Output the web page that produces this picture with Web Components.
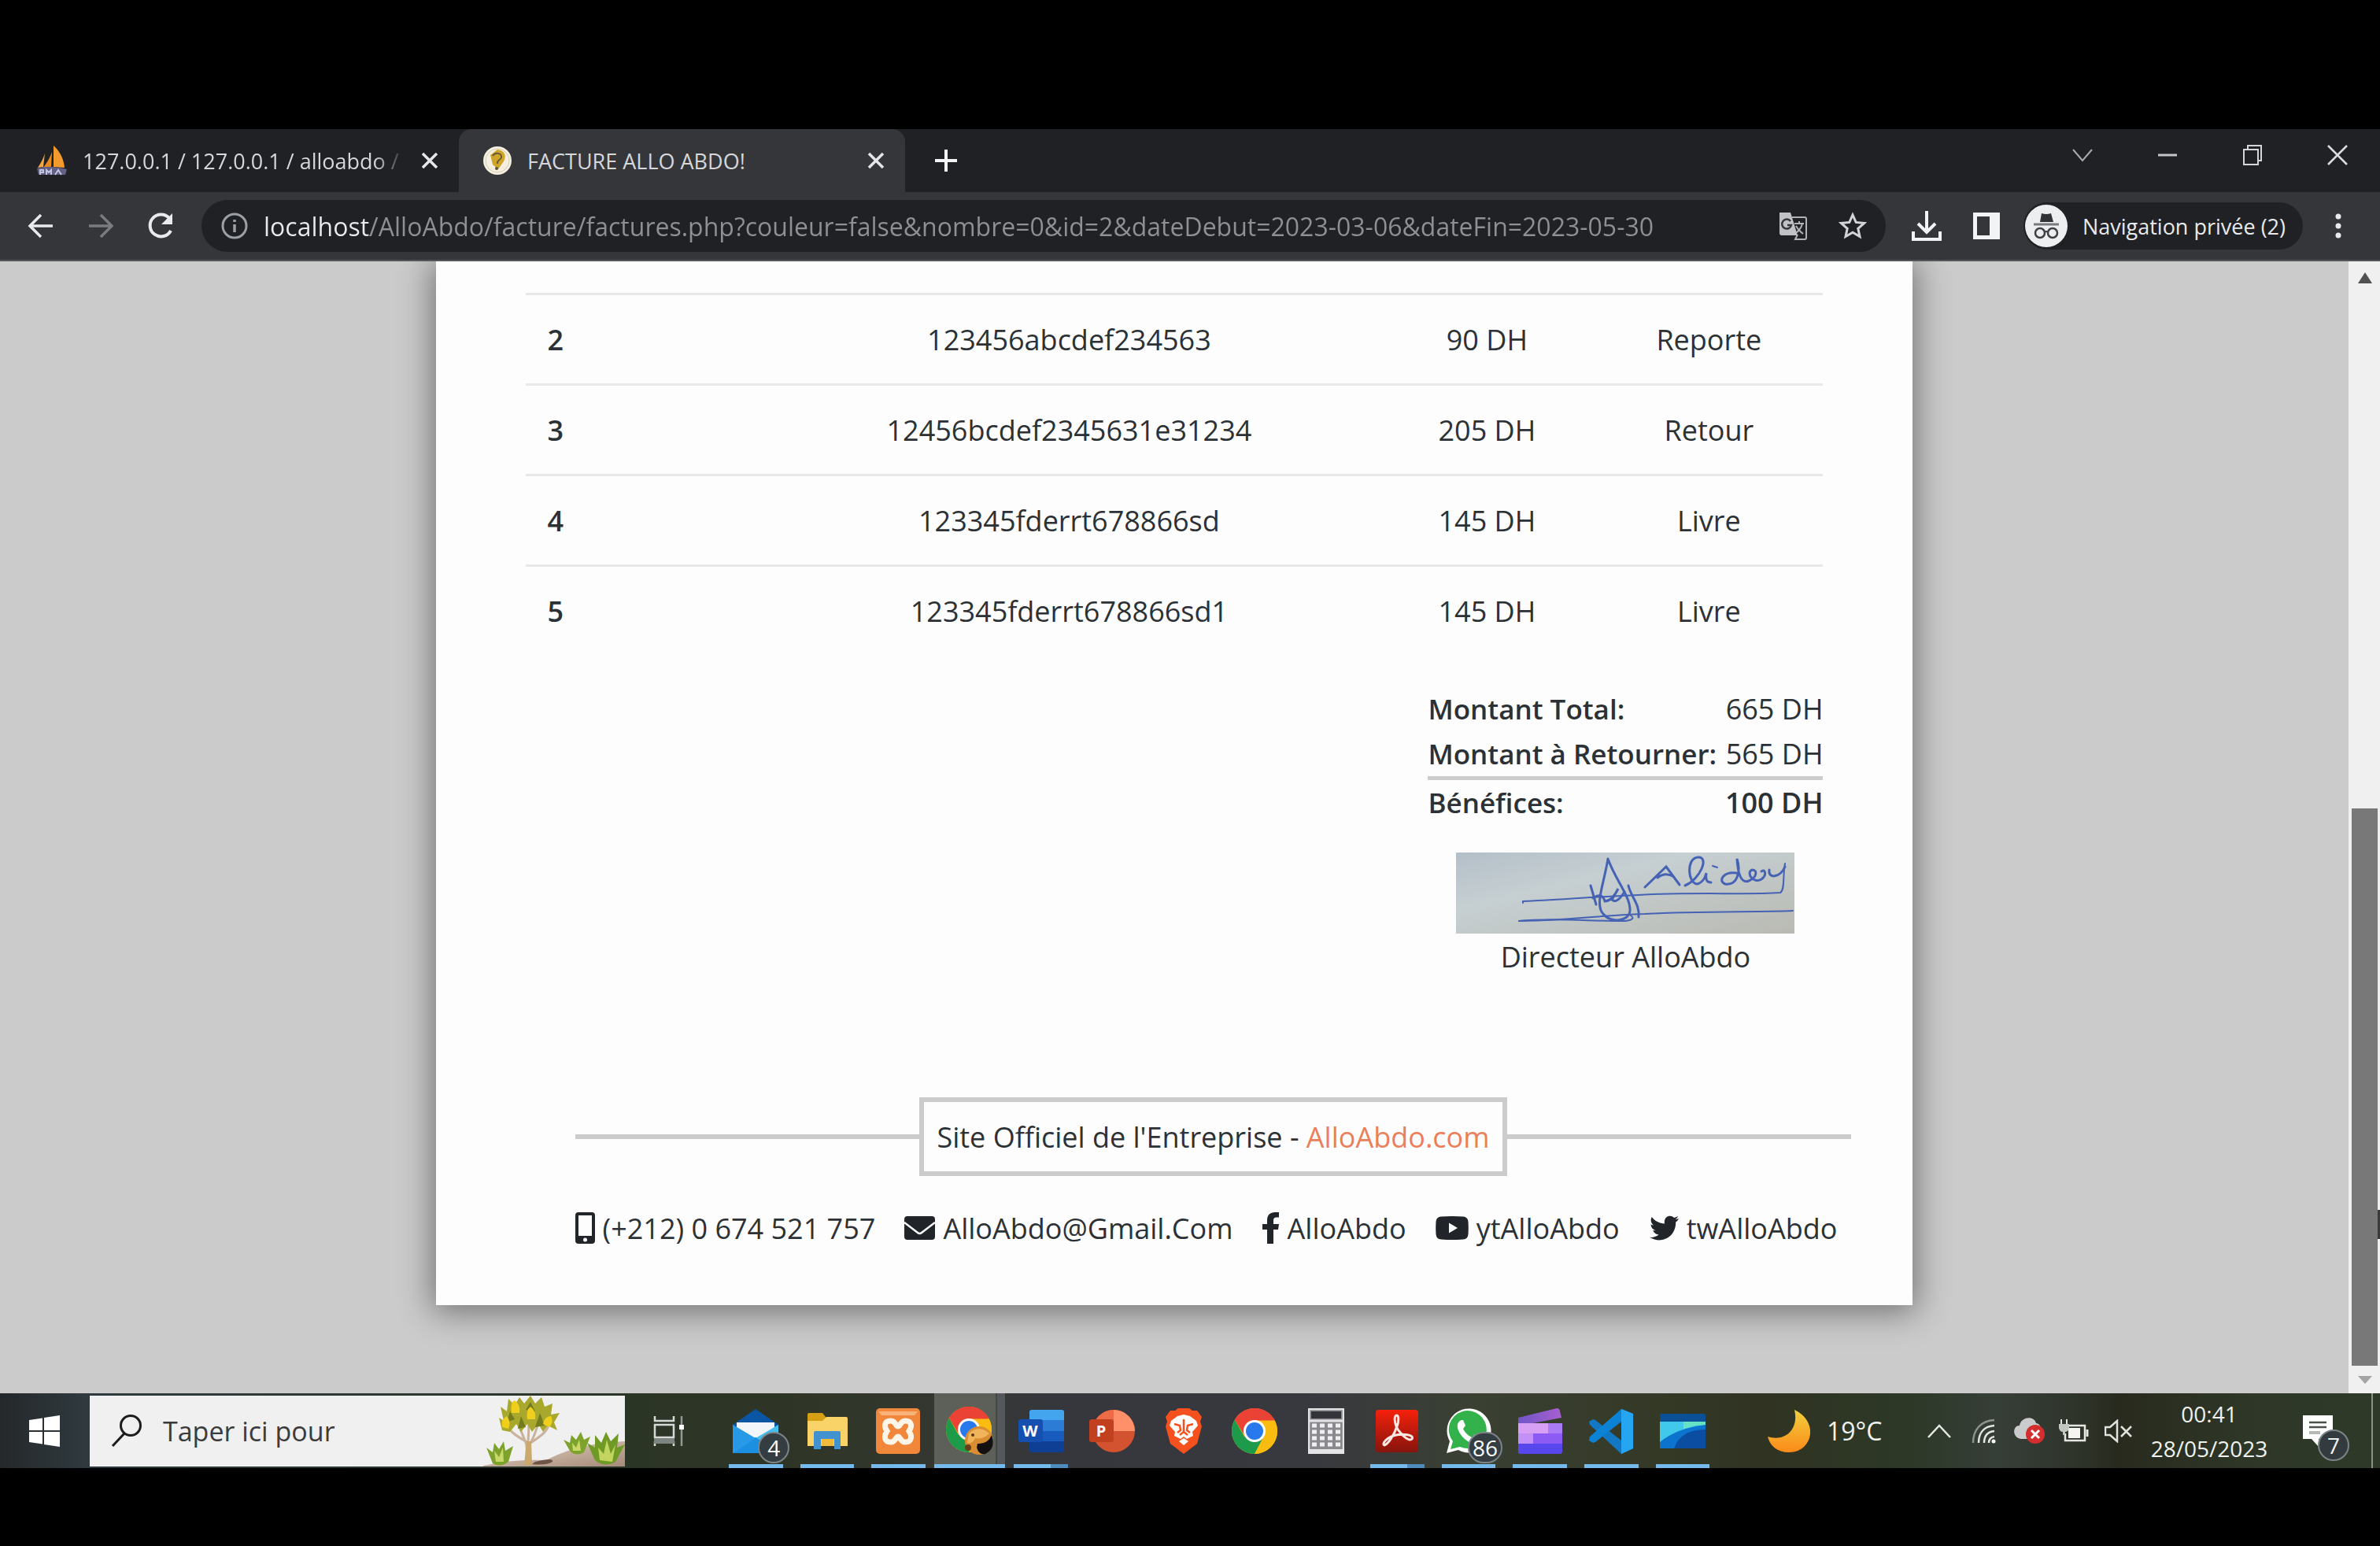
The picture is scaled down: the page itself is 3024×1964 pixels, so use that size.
<!DOCTYPE html>
<html lang="fr">
<head>
<meta charset="utf-8">
<title>FACTURE ALLO ABDO!</title>
<style>
html{height:100%}
body{margin:0;min-height:100%;background:#000;font-family:"Open Sans","Noto Sans",sans-serif;color:#fff}
</style>
</head>
<body>
<desktop-screen></desktop-screen>
<script>
const chromeLogo = `
<circle cx="30" cy="29" r="29" fill="#fbbc12"/>
<path d="M30 29L4.900 14.500A29 29 0 0 1 55.100 14.500Z" fill="#ea4335"/>
<path d="M4.900 14.500A29 29 0 0 0 30 58L43 36L30 29L17 36Z" fill="#1e9a4b"/>
<path d="M30 15.500H55.700A29 29 0 0 0 4.900 14.500L18 36Z" fill="#ea4335"/>
<path d="M30 15.500H55.700A29 29 0 0 1 30 58L42 35Z" fill="#fbbc12"/>
<circle cx="30" cy="29" r="14" fill="#fff"/><circle cx="30" cy="29" r="11" fill="#2878ee"/>`;

const ICONS = {
  sails: [40,38,`<path d="M22 0C31 8 35 18 36 28L22 27Z" fill="#f59a2c"/><path d="M20 8L19 27L9 28C15 20 18 14 20 8Z" fill="#e98b1c"/><path d="M11 10L9 27L2 28C6 22 9 16 11 10Z" fill="#f3a548"/><path d="M1 29C12 25 28 27 39 30L37 37H3Z" fill="#626084"/><path d="M5 37V31H9V34H5M13 37V31L16 34L19 31V37M24 37L28 31L32 37" stroke="#c3c4e0" stroke-width="2" fill="none"/>`],
  coin: [38,38,`<circle cx="19" cy="19" r="18" fill="#f4efe1"/><circle cx="19" cy="19" r="15" fill="none" stroke="#d8cfae" stroke-width="1"/><path d="M19 5C28 6 31 13 27 20L20 30L13 24L10 12Z" fill="#d0a52c"/><path d="M13 13C16 8 25 9 24 15C23 19 18 18 19 23" stroke="#6a5a32" stroke-width="2" fill="none"/><circle cx="18" cy="29" r="2" fill="#5d5135"/>`],
  close: [22,22,`<path d="M2 2L20 20M20 2L2 20" stroke="#e4e6e8" stroke-width="3.500" fill="none"/>`],
  plus: [32,32,`<path d="M16 2V30M2 16H30" stroke="#f1f3f4" stroke-width="4"/>`],
  chevron: [28,18,`<path d="M2 2L14 16L26 2" stroke="#a9abad" stroke-width="2" fill="none"/>`],
  minimize: [24,6,`<path d="M0 3H24" stroke="#c3c5c7" stroke-width="3"/>`],
  restore: [26,28,`<rect x="2" y="7" width="18" height="19" fill="none" stroke="#d3d5d7" stroke-width="2"/><path d="M7 6V2H24V21H21" fill="none" stroke="#d3d5d7" stroke-width="2"/>`],
  winclose: [26,26,`<path d="M1 1L25 25M25 1L1 25" stroke="#d9dbdd" stroke-width="2.500"/>`],
  back: [34,32,`<path d="M32 16H3M17 2L3 16L17 30" stroke="#e8eaed" stroke-width="3.500" fill="none"/>`],
  forward: [34,32,`<path d="M2 16H31M17 2L31 16L17 30" stroke="#797b7e" stroke-width="3.500" fill="none"/>`],
  reload: [36,34,`<path d="M29 7A14 14 0 1 0 31 23" stroke="#e8eaed" stroke-width="4" fill="none"/><path d="M33 1V15H19Z" fill="#e8eaed"/>`],
  info: [34,34,`<circle cx="17" cy="17" r="15" fill="none" stroke="#9aa0a6" stroke-width="3"/><path d="M17 15V25M17 9V12" stroke="#9aa0a6" stroke-width="3.500"/>`],
  translate: [36,36,`<path d="M1 1H15L24 30H4A3 3 0 0 1 1 27Z" fill="#c0c2c5"/><path d="M17 7H33A2 2 0 0 1 35 9V33A2 2 0 0 1 33 35H21L24 29" fill="none" stroke="#b0b3b6" stroke-width="2"/><path d="M15 12A6 6 0 1 0 16 17H11" stroke="#34363a" stroke-width="2.500" fill="none"/><path d="M20 15H32M26 12V15M30 15C29 20 26 24 22 27M22 18C24 22 27 25 31 28" stroke="#b0b3b6" stroke-width="2" fill="none"/>`],
  star: [36,36,`<path d="M18 4L22.200 13.400L32.500 14.500L24.800 21.400L27 31.500L18 26.300L9 31.500L11.200 21.400L3.500 14.500L13.800 13.400Z" fill="none" stroke="#d2d4d7" stroke-width="3"/>`],
  download: [38,40,`<path d="M19 1V27M8 17L19 28L30 17" stroke="#f1f3f4" stroke-width="4" fill="none"/><path d="M2 27V37H36V27" stroke="#f1f3f4" stroke-width="4" fill="none"/>`],
  panel: [36,36,`<path d="M1 1H35V35H1ZM6 6V30H22V6Z" fill="#f1f3f4" fill-rule="evenodd"/>`],
  incognito: [54,54,`<circle cx="27" cy="27" r="27" fill="#eceef0"/><path d="M19 22L21 11Q27 13 33 11L36 22Z" fill="#303236"/><path d="M11 25H43" stroke="#77797c" stroke-width="3"/><circle cx="19" cy="36" r="6" fill="none" stroke="#3f4145" stroke-width="2.500"/><circle cx="35" cy="36" r="6" fill="none" stroke="#3f4145" stroke-width="2.500"/><path d="M25 35Q27 33 29 35" stroke="#3f4145" stroke-width="2" fill="none"/>`],
  dots: [10,34,`<circle cx="5" cy="5" r="3.500" fill="#e8eaed"/><circle cx="5" cy="17" r="3.500" fill="#e8eaed"/><circle cx="5" cy="29" r="3.500" fill="#e8eaed"/>`],
  phone: [25,40,`<path d="M4 0H21A4 4 0 0 1 25 4V36A4 4 0 0 1 21 40H4A4 4 0 0 1 0 36V4A4 4 0 0 1 4 0ZM4 4V30H21V4Z" fill="#212529" fill-rule="evenodd"/><circle cx="12.500" cy="35" r="2.500" fill="#fdfdfd"/>`],
  mail: [39,30,`<rect width="39" height="30" rx="4" fill="#212529"/><path d="M0 8L17 21Q19.500 23 22 21L39 8" fill="none" stroke="#fdfdfd" stroke-width="2.500"/>`],
  facebook: [22,40,`<path d="M6 40V22H0V15H6V10C6 3.500 10 0 16 0H21V6.500H18C15 6.500 14 8 14 10.500V15H21L20 22H14V40Z" fill="#212529"/>`],
  youtube: [42,30,`<path d="M7 .5Q21-.5 35 .5Q41 1 41.500 7Q42 15 41.500 23Q41 29 35 29.500Q21 30.500 7 29.500Q1 29 .5 23Q0 15 .5 7Q1 1 7 .5Z" fill="#212529"/><path d="M17 8.500V21.500L28 15Z" fill="#fdfdfd"/>`],
  twitter: [38,32,`<path d="M38 4C36.600 4.600 35.200 5 33.600 5.200C35.200 4.200 36.400 2.800 37 1C35.500 1.900 33.800 2.500 32 2.900C27.500-1.800 18.500 1 20 10.500C13.500 10.200 7.600 7.200 3.700 2C1.700 5.500 2.600 10 6.100 12.400C4.800 12.400 3.600 12 2.600 11.400C2.600 15.100 5.200 18.200 8.800 19C7.600 19.300 6.500 19.300 5.300 19.100C6.300 22.200 9.200 24.500 12.600 24.500C9.300 27.100 5 28.300 1 27.800C15.500 37 34.500 28 34.200 8.600C35.700 7.500 37 6 38 4Z" fill="#212529"/>`],
  windows: [40,40,`<path d="M0 6L17 3.500V19H0ZM19 3L39 0V19H19ZM0 21H17V36.500L0 34ZM19 21H39V40L19 37Z" fill="#fff"/>`],
  search: [40,42,`<circle cx="25" cy="14" r="12.500" fill="none" stroke="#1d1d1d" stroke-width="3"/><path d="M17 24L2 40" stroke="#1d1d1d" stroke-width="3"/>`],
  taskview: [40,40,`<path d="M2 1V7H26V1M2 39V33M26 39V33" fill="none" stroke="#d6dad6" stroke-width="2.500"/><rect x="2" y="12" width="24" height="16" fill="none" stroke="#d6dad6" stroke-width="2.500"/><rect x="1" y="29" width="26" height="7" fill="#7d8580"/><path d="M36 1V39" stroke="#929993" stroke-width="2.500"/><rect x="33" y="12" width="6" height="6" fill="#fff"/>`],
  desert: [180,90,`<defs><linearGradient id="sand" x1="0" y1="0" x2="1" y2="1"><stop offset="0" stop-color="#e5d5c4"/><stop offset="1" stop-color="#a58a78"/></linearGradient></defs>
    <path d="M0 89Q40 80 80 82Q120 60 180 58V90H0Z" fill="url(#sand)"/><path d="M66 84Q90 78 88 84Q80 89 62 87Z" fill="#6f5546"/>
    <path d="M53 88C57 72 55 62 54 58C40 50 32 44 30 36M54 60C50 48 46 42 44 34M57 58C58 46 58 40 58 32M60 60C72 52 82 46 84 34M60 60C66 50 68 42 70 34" stroke="#c9b19c" stroke-width="3" fill="none"/><path d="M52 88L55 58H61L62 88Z" fill="#cba86c"/>
    <path d="M24 44L20 28L26 32L22 14L30 20L32 4L40 12L46 2L52 10L60 0L66 10L74 2L78 14L88 10L86 24L97 22L90 34L94 44L82 38L76 46L70 36L62 46L56 36L48 46L42 36L34 46Z" fill="#a8a82c"/>
    <path d="M30 34L34 20L40 30ZM44 42L48 26L54 40ZM66 40L72 22L78 38ZM54 18L60 8L66 20Z" fill="#727b1e"/>
    <path d="M36 22Q34 8 40 6Q48 12 46 22ZM56 30Q54 18 60 14Q68 20 66 30ZM24 40Q22 30 30 26Q36 34 32 42ZM76 36Q78 26 86 26Q90 34 84 40Z" fill="#f0cf1c"/>
    <path d="M12 86L4 66L12 72L14 60L20 68L26 58L28 70L38 64L32 84Q22 92 12 86Z" fill="#7ea32c"/><path d="M16 84L14 70L20 78L25 66L26 84Z" fill="#c8d869"/>
    <path d="M110 70L102 56L110 60L112 50L118 56L124 46L128 56L136 52L128 72Q118 78 110 70Z" fill="#7ea32c"/><path d="M114 70L113 60L118 66L122 56L124 70Z" fill="#c8d869"/>
    <path d="M142 82L132 60L142 66L142 50L150 60L156 46L162 58L172 48L170 66L180 62L168 84Q154 92 142 82Z" fill="#6f9a25"/><path d="M148 82L146 66L153 74L157 56L162 74L168 62L164 84Z" fill="#c3d460"/>`],
  mailapp: [58,56,`<path d="M0 20L29 0L58 20V30H0Z" fill="#0a56a4"/><path d="M5 17H53V40H5Z" fill="#f2f6fa"/><path d="M0 20L29 37L0 56Z" fill="#2aa4ea"/><path d="M58 20L29 37L58 56Z" fill="#45c0ee"/><path d="M0 55L29 36L58 55V56H0Z" fill="#1b8fe0"/><path d="M0 56L31 36L26 36L0 20Z" fill="#2799e6"/>`],
  explorer: [52,46,`<path d="M1 2A2 2 0 0 1 3 0H20L24 5V16H1Z" fill="#d69e13"/><path d="M1 10H20L25 5H50A2 2 0 0 1 52 7V42H1Z" fill="#fad368"/><path d="M9 25A2 2 0 0 1 11 23H41A2 2 0 0 1 43 25V46H35V33H18V46H9Z" fill="#4292cf"/><rect x="19" y="33" width="15" height="9" fill="#f0bb38"/>`],
  xampp: [56,58,`<rect width="56" height="58" rx="5" fill="#f1873b"/><path d="M3 4H53L49 9H7Z" fill="#f8b27c"/><path d="M19 16C10 16 10 23 14 29C10 35 10 43 19 43C25 43 25 36 28 36C31 36 31 43 37 43C46 43 46 35 42 29C46 23 46 16 37 16C31 16 31 23 28 23C25 23 25 16 19 16Z" fill="none" stroke="#fdf6e8" stroke-width="7"/>`],
  chrome: [60,58,chromeLogo],
  chromeuser: [62,62,chromeLogo+`<circle cx="43" cy="43" r="18" fill="#d98d33"/><path d="M30 34Q42 22 56 34Q48 42 38 40Q34 48 28 46Z" fill="#f0b55b"/><path d="M41 47Q54 48 59 36Q65 53 51 60Q43 62 40 52Z" fill="#141010"/><circle cx="35" cy="36" r="2" fill="#5d3a17"/><circle cx="29" cy="52" r="4" fill="#6b3d16"/>`],
  word: [58,54,`<rect x="14" y="0" width="44" height="54" rx="3" fill="#0f3f94"/><path d="M14 3A3 3 0 0 1 17 0H55A3 3 0 0 1 58 3V14H14Z" fill="#42a5ee"/><rect x="14" y="13" width="44" height="14" fill="#2c7cd6"/><rect x="14" y="27" width="44" height="13" fill="#195abd"/><rect x="0" y="12" width="31" height="29" rx="3" fill="#154fb0"/><text x="15" y="34" font-size="20" font-weight="700" fill="#fff" text-anchor="middle">W</text>`],
  powerpoint: [58,54,`<circle cx="31" cy="27" r="27" fill="#d35230"/><path d="M31 0A27 27 0 0 1 58 27H31Z" fill="#ff9069"/><path d="M31 0V27H4A27 27 0 0 1 31 0Z" fill="#ed6c47"/><rect x="0" y="12" width="31" height="29" rx="3" fill="#c1401f"/><text x="15" y="34" font-size="20" font-weight="700" fill="#fff" text-anchor="middle">P</text>`],
  brave: [50,58,`<path d="M14 3L18 0H32L36 3L42 3L48 11L46 17L48 23L42 45L25 58L8 45L2 23L4 17L2 11L8 3Z" fill="#f4511e"/><path d="M25 8L33 10L41 16L43 22L36 30L37 35L29 39L25 36L21 39L13 35L14 30L7 22L9 16L17 10Z" fill="#fff"/><path d="M13 20L20 22L21 28L17 31M37 20L30 22L29 28L33 31M25 14V30L20 34M25 30L30 34" fill="none" stroke="#f4511e" stroke-width="2.500"/><path d="M19 42L25 38L31 42L25 47Z" fill="#fff"/>`],
  calculator: [46,58,`<path d="M1 1H45V57H1Z" fill="#8a8a8e" stroke="#e4e4e6" stroke-width="2.500"/><rect x="4" y="4" width="38" height="9" fill="#333439"/><path d="M1 16H45" stroke="#e4e4e6" stroke-width="3"/><path d="M5 22H41M5 30H41M5 38H41M5 46H41" stroke="#f0f0f2" stroke-width="5" stroke-dasharray="6 4"/><path d="M1 54H45" stroke="#e4e4e6" stroke-width="4"/>`],
  acrobat: [56,56,`<defs><linearGradient id="red" x2="0" y2="1"><stop stop-color="#f5210c"/><stop offset="1" stop-color="#86140d"/></linearGradient></defs><rect x="1" y="1" width="54" height="54" rx="4" fill="url(#red)"/><path d="M26 9C30 5 31 14 28 22C24 34 16 45 12 46C8 44 16 35 27 33C38 31 50 33 47 38C43 42 31 31 27 22C25 16 24 12 26 9Z" fill="none" stroke="#fbe7e4" stroke-width="3"/>`],
  whatsapp: [58,58,`<path d="M1 57L5 42A28 28 0 1 1 16 53Z" fill="#fff"/><path d="M6 52L9 42A24 24 0 1 1 18 49Z" fill="#33b14a"/><path d="M20 15C14 17 13 24 18 32C24 41 32 46 39 44C43 42 45 39 43 37L37 33L33 37Q25 33 22 26L25 22L22 15Z" fill="#fff"/>`],
  clipchamp: [58,58,`<defs><linearGradient id="clip" x2="1"><stop stop-color="#6f55c8"/><stop offset="1" stop-color="#a75fcf"/></linearGradient></defs><path d="M1 12L50 0Q54 0 54 4L56 12L4 22H1Z" fill="url(#clip)"/><path d="M1 19H57V54Q57 58 53 58H5Q1 58 1 54Z" fill="#8b5bf3"/><path d="M1 19H39V32H1Z" fill="#d8a0f5"/><path d="M39 19H57V32H39Z" fill="#a97cf6"/><path d="M1 32H20V45H1Z" fill="#c391f6"/><path d="M1 45H57V54Q57 58 53 58H5Q1 58 1 54Z" fill="#5747ec"/>`],
  vscode: [58,58,`<path d="M42 1L57 7V51L42 58L2 21L1 17L6 14L9 15L42 41Z" fill="#1278c4"/><path d="M42 1L57 7V51L42 58V17L9 43L6 44L1 41L2 36Z" fill="#0b82d4"/><path d="M42 1L57 7V51L42 58Z" fill="#25a5f2"/>`],
  lens: [58,44,`<rect width="58" height="44" rx="2" fill="#0b4f97"/><path d="M0 10H58V20C38 18 22 26 16 44H0Z" fill="#41c9ec"/><path d="M30 10H58V15Q42 14 30 20Z" fill="#65e3c4"/><path d="M0 36Q22 18 58 14V44H0Z" fill="#0c74cf"/><path d="M18 44Q26 20 58 20V44Z" fill="#0b4da0"/>`],
  moon: [54,56,`<defs><linearGradient id="glow" x2="0" y2="1"><stop stop-color="#f2d03c"/><stop offset="1" stop-color="#fb8a1a"/></linearGradient></defs><path d="M34 1C66 16 57 55 27 55C12 55 3 47 0 35C22 42 40 26 34 1Z" fill="url(#glow)"/>`],
  up: [32,18,`<path d="M2 17L16 2L30 17" fill="none" stroke="#e6e9e4" stroke-width="2.500"/>`],
  wifi: [32,32,`<path d="M2 31C2 14 12 3 29 2" fill="none" stroke="#8d938c" stroke-width="2.500"/><path d="M9 31C9 18 16 10 29 9M16 31C16 23 20 17 29 16M22 31C22 27 24 24 29 23" fill="none" stroke="#e2e5e0" stroke-width="2.500"/><circle cx="28" cy="29" r="2.500" fill="#fff"/>`],
  cloud: [40,36,`<path d="M10 28C-2 26-1 11 8 11C10-1 27-2 29 8C38 9 37 26 28 28Z" fill="#c9cbcc"/><circle cx="28" cy="22" r="12" fill="#d32f2f"/><path d="M23 17L33 27M33 17L23 27" stroke="#fff" stroke-width="3"/>`],
  battery: [38,30,`<path d="M11 8H33V27H8V18" fill="none" stroke="#e4e7e2" stroke-width="2.500"/><rect x="12" y="11" width="15" height="13" fill="#f4f5f3"/><path d="M36 13V22" stroke="#e4e7e2" stroke-width="3"/><path d="M3 0V6M10 0V6" stroke="#e4e7e2" stroke-width="2"/><path d="M0 6H13V11Q12 16 8 16V20H5V16Q1 16 0 11Z" fill="#c2c7c0"/>`],
  speaker: [36,30,`<path d="M1 10H7L16 2V28L7 20H1Z" fill="none" stroke="#dfe2dd" stroke-width="2.500"/><path d="M21 9L34 22M34 9L21 22" stroke="#dfe2dd" stroke-width="2.500"/>`],
  notice: [38,40,`<path d="M0 0H38V30H20V40L11 30H0Z" fill="#fff"/><path d="M8 9H30M8 15H30" stroke="#4a5148" stroke-width="2.500"/><path d="M8 22H22" stroke="#b4b8b3" stroke-width="4"/>`],
  signature: [430,103,`<defs><linearGradient id="sheet" x2="1" y2="1"><stop stop-color="#b3bfc8"/><stop offset=".35" stop-color="#c6cfd2"/><stop offset="1" stop-color="#b9bab2"/></linearGradient></defs><rect width="430" height="103" fill="url(#sheet)"/>
    <g fill="none" stroke="#4562b4" stroke-width="3" stroke-linecap="round"><path d="M85 64V62C130 60 180 56 232 54C300 50 370 54 412 51C418 48 415 30 418 14" stroke-width="2"/><path d="M80 87C160 86 170 80 240 78C310 74 380 76 428 74" stroke-width="2"/><path d="M80 87C120 82 180 88 215 87C222 86 228 84 222 80" stroke-width="2"/>
    <path d="M171 42L178 66"/><path d="M193 8C188 40 176 66 187 78C196 90 220 88 221 74C222 56 202 34 193 8"/><path d="M174 58Q186 50 189 62Q198 62 206 46L198 60Q204 66 214 50"/><path d="M219 42C222 56 234 66 232 82"/><path d="M240 44L267 18L284 41M256 32Q266 24 277 31"/><path d="M291 42C310 34 322 6 308 6C292 6 294 40 307 40C314 38 317 30 318 26C317 34 318 38 324 38"/><path d="M326 17L332 19" stroke-width="2"/><path d="M356 26C340 24 332 36 342 40C358 42 362 24 357 8C358 26 362 40 372 36C382 32 384 22 376 22C368 26 378 40 388 34C396 28 392 20 388 24M398 22C396 34 412 32 418 18"/></g>`]
};

const define = (name, css, html, setup) => customElements.define(name, class extends HTMLElement {
  constructor() {
    super();
    const t = document.createElement('template');
    t.innerHTML = `<style>:host,*{box-sizing:border-box}button{font:inherit;color:inherit;background:none;border:0;padding:0;margin:0;display:flex;align-items:center;justify-content:center}${css}</style>${html}`;
    this.attachShadow({mode: 'open'}).append(t.content.cloneNode(true));
  }
  connectedCallback() { if (setup) setup(this, this.shadowRoot); }
});

customElements.define('ui-icon', class extends HTMLElement {
  connectedCallback() {
    if (this.shadowRoot) return;
    const [w, h, body] = ICONS[this.getAttribute('name')];
    this.attachShadow({mode: 'open'}).innerHTML =
      `<style>:host{display:block;flex:none}svg{display:block}</style><svg width="${w}" height="${h}" viewBox="0 0 ${w} ${h}" aria-hidden="true">${body}</svg>`;
  }
});

define('browser-tab',
  `:host{display:flex;align-items:center;gap:19px;width:567px;height:80px;padding:0 26px 0 30px;font-size:27px;color:#d5d7da}
   :host([active]){background:#35363a;border-radius:16px 16px 0 0}
   .title{flex:1;min-width:0;overflow:hidden;white-space:nowrap}
   :host([fade]) .title{-webkit-mask-image:linear-gradient(90deg,#000 90%,transparent)}`,
  `<slot name="icon"></slot><span class="title"><slot></slot></span><button aria-label="Fermer l'onglet"><ui-icon name="close"></ui-icon></button>`);

define('tab-strip',
  `:host{display:flex;height:80px;background:#202124;padding-left:16px}
   .new{width:104px;height:80px}.controls{display:flex;margin-left:auto}.controls button{width:108px;height:66px}`,
  `<browser-tab fade><ui-icon slot="icon" name="sails"></ui-icon>127.0.0.1 / 127.0.0.1 / alloabdo / c</browser-tab>
   <browser-tab active><ui-icon slot="icon" name="coin"></ui-icon>FACTURE ALLO ABDO!</browser-tab>
   <button class="new" aria-label="Nouvel onglet"><ui-icon name="plus"></ui-icon></button>
   <div class="controls"><button aria-label="Rechercher"><ui-icon name="chevron"></ui-icon></button><button aria-label="Réduire"><ui-icon name="minimize"></ui-icon></button><button aria-label="Restaurer"><ui-icon name="restore"></ui-icon></button><button aria-label="Fermer"><ui-icon name="winclose"></ui-icon></button></div>`);

define('nav-toolbar',
  `:host{display:flex;align-items:center;height:88px;background:#35363a;border-bottom:2px solid #55565a;padding:0 15px 0 14px}
   button{width:76px;height:66px}
   .omnibox{flex:1;min-width:0;height:66px;border-radius:33px;background:#202124;margin:0 14px;padding:0 4px 0 25px;display:flex;align-items:center;gap:20px}
   .actions{display:flex}
   input{flex:1;min-width:0;height:60px;border:0;padding:0;outline:0;font:inherit;font-size:32px;color:#9aa0a6;background:linear-gradient(90deg,#e8eaed 135px,#8d9094 135px);-webkit-background-clip:text;background-clip:text;-webkit-text-fill-color:transparent}
   .profile{width:auto;height:60px;border-radius:30px;background:#202124;margin:0 7px 0 9px;padding:0 22px 0 2px;gap:19px;font-size:27px;color:#e8eaed;white-space:nowrap}`,
  `<button aria-label="Retour"><ui-icon name="back"></ui-icon></button><button aria-label="Avancer"><ui-icon name="forward"></ui-icon></button><button aria-label="Actualiser"><ui-icon name="reload"></ui-icon></button>
   <div class="omnibox"><ui-icon name="info"></ui-icon><input type="text" aria-label="Adresse" value="localhost/AlloAbdo/facture/factures.php?couleur=false&amp;nombre=0&amp;id=2&amp;dateDebut=2023-03-06&amp;dateFin=2023-05-30"><div class="actions"><button aria-label="Traduire"><ui-icon name="translate"></ui-icon></button><button aria-label="Favori"><ui-icon name="star"></ui-icon></button></div></div>
   <button aria-label="Téléchargements"><ui-icon name="download"></ui-icon></button><button aria-label="Panneau latéral"><ui-icon name="panel"></ui-icon></button>
   <button class="profile"><ui-icon name="incognito"></ui-icon><span>Navigation privée (2)</span></button>
   <button aria-label="Menu"><ui-icon name="dots"></ui-icon></button>`);

define('invoice-lines',
  `:host{display:block}table{width:100%;border-collapse:collapse;table-layout:fixed}
   th,td{height:115px;padding:0 28px;border-top:3px solid #e6e8e9;font-size:36px;text-align:center;font-weight:400}
   td{padding:0}th{text-align:left;font-weight:600}`,
  `<table><colgroup><col style="width:18%"><col style="width:47.8%"><col style="width:16.6%"><col style="width:17.6%"></colgroup><tbody></tbody></table>`,
  (host, root) => {
    root.querySelector('tbody').innerHTML = [
      ['2', '123456abcdef234563', '90 DH', 'Reporte'],
      ['3', '12456bcdef2345631e31234', '205 DH', 'Retour'],
      ['4', '123345fderrt678866sd', '145 DH', 'Livre'],
      ['5', '123345fderrt678866sd1', '145 DH', 'Livre']
    ].map(([n, ...cells]) => `<tr><th scope="row">${n}</th>${cells.map(c => `<td>${c}</td>`).join('')}</tr>`).join('');
  });

define('invoice-totals',
  `:host{display:block;width:502px;margin-left:auto;font-size:36px;line-height:57px;white-space:nowrap}
   table{width:100%;border-collapse:collapse}th,td{padding:0;text-align:left;font-weight:600}th{font-size:35px}td{text-align:right;font-weight:400}
   .net th,.net td{border-top:5px solid #ccc;font-weight:600}
   figure{margin:35px 0 0;display:flex;flex-direction:column;align-items:center}figcaption{line-height:60px}`,
  `<table><tr><th scope="row">Montant Total:</th><td>665 DH</td></tr><tr><th scope="row">Montant à Retourner:</th><td>565 DH</td></tr><tr class="net"><th scope="row">Bénéfices:</th><td>100 DH</td></tr></table>
   <figure><ui-icon name="signature"></ui-icon><figcaption>Directeur AlloAbdo</figcaption></figure>`);

define('contact-item',
  `:host{display:flex;align-items:center;gap:10px;white-space:nowrap}`,
  `<slot name="icon"></slot><span><slot></slot></span>`);

define('invoice-footer',
  `:host{display:block;margin:0 78px 0 177px;font-size:36px}
   .site{display:flex;align-items:center}.site::before,.site::after{content:"";flex:1;height:6px;background:#ccc}
   p{margin:0;height:100px;padding:0 16px;border:6px solid #ccc;line-height:90px;white-space:nowrap}
   a{color:#ea7f5a;text-decoration:none}
   address{display:flex;justify-content:space-between;padding-right:18px;margin-top:38px;line-height:57px;font-style:normal}`,
  `<div class="site"><p>Site Officiel de l'Entreprise - <a href="#site">AlloAbdo.com</a></p></div>
   <address><contact-item><ui-icon slot="icon" name="phone"></ui-icon>(+212) 0 674 521 757</contact-item><contact-item><ui-icon slot="icon" name="mail"></ui-icon>AlloAbdo@Gmail.Com</contact-item><contact-item><ui-icon slot="icon" name="facebook"></ui-icon>AlloAbdo</contact-item><contact-item><ui-icon slot="icon" name="youtube"></ui-icon>ytAlloAbdo</contact-item><contact-item><ui-icon slot="icon" name="twitter"></ui-icon>twAlloAbdo</contact-item></address>`);

define('invoice-paper',
  `:host{display:block;width:62.9%;margin:0 auto;padding:40px 0 69px;background:#fdfdfd;color:#2c3135;box-shadow:0 4px 40px 4px rgba(0,0,0,.45)}
   .body{margin:0 114px}invoice-totals{margin-top:38px}invoice-footer{margin-top:148px}`,
  `<div class="body"><invoice-lines></invoice-lines><invoice-totals></invoice-totals></div><invoice-footer></invoice-footer>`);

define('page-scrollbar',
  `:host{display:flex;flex-direction:column;align-items:center;width:40px;background:#f0f0f0;padding:14px 3px 12px 4px;position:relative}
   .up,.down{border:9px solid transparent}.up{border-top:0;border-bottom:14px solid #505050}.down{border-bottom:0;border-top:10px solid #a3a3a3}
   .track{flex:1;width:100%;margin:14px 0 13px;display:flex;flex-direction:column;justify-content:flex-end}
   .thumb{height:52%;background:#787878}
   .pointer{position:absolute;right:0;bottom:196px;width:3px;height:37px;background:#3a3a3a}`,
  `<span class="up"></span><div class="track"><div class="thumb"></div></div><span class="down"></span><span class="pointer"></span>`);

define('task-app',
  `:host{flex:1;min-width:0;display:flex;justify-content:center;position:relative}
   button{width:90px;height:95px}
   .holder{position:relative;display:flex;align-items:center;height:66px}
   .badge{position:absolute;right:-14px;bottom:-8px;min-width:40px;height:40px;padding:0 4px;border:2px solid #7c8488;border-radius:20px;background:#343e42;font-size:28px;line-height:36px;text-align:center;color:#fff}
   .badge:empty{display:none}
   :host([open])::after{content:"";position:absolute;bottom:0;left:11px;right:11px;height:5px;background:#76b9ed}
   :host([many])::after{background:linear-gradient(90deg,#76b9ed 68%,#4f8cbd 68%)}
   :host([active]){background:linear-gradient(90deg,#5c6058 87%,#44474a 87%,#44474a 89%,#54585a 89%)}
   :host([active])::after{left:0;right:0}`,
  `<button><span class="holder"><span class="badge"></span></span></button>`,
  (host, root) => {
    const icon = document.createElement('ui-icon');
    icon.setAttribute('name', host.getAttribute('icon'));
    root.querySelector('.holder').prepend(icon);
    root.querySelector('button').setAttribute('aria-label', host.getAttribute('icon'));
    root.querySelector('.badge').textContent = host.getAttribute('count') || '';
  });

define('task-search',
  `:host{display:flex;align-items:center;width:680px;height:90px;align-self:center;background:#f0f0f0;padding-left:27px}
   label{display:flex;align-items:center;gap:26px;flex:1;min-width:0}
   input{flex:1;min-width:0;border:0;padding:0;background:none;font:inherit;font-size:34px;color:#3b3b3b}
   input::placeholder{color:#3b3b3b;opacity:1}`,
  `<label><ui-icon name="search"></ui-icon><input type="text" aria-label="Taper ici pour rechercher" placeholder="Taper ici pour"></label><ui-icon name="desert"></ui-icon>`);

define('system-tray',
  `:host{display:flex;align-items:center;width:841px;height:95px;color:#f0f2ee}
   .weather{width:175px;margin:0 14px 0 63px;justify-content:flex-start;gap:21px;font-size:32px;white-space:nowrap}
   .small{width:57px;height:95px}
   .clock{width:174px;font-size:28px;line-height:44px;text-align:center;display:block}
   .notice{width:119px;height:95px;justify-content:flex-start;padding-left:32px;position:relative}
   .badge{position:absolute;left:51px;top:46px;width:40px;height:40px;border:2px solid #7c8488;border-radius:50%;background:#343b3e;font-size:28px;line-height:36px}
   .desktop{width:11px;height:95px;border-left:2px solid #8a9188}`,
  `<button class="weather"><ui-icon name="moon"></ui-icon><span>19°C</span></button>
   <button class="small" aria-label="Icônes cachées"><ui-icon name="up"></ui-icon></button><button class="small" aria-label="Réseau"><ui-icon name="wifi"></ui-icon></button><button class="small" aria-label="OneDrive"><ui-icon name="cloud"></ui-icon></button><button class="small" aria-label="Batterie"><ui-icon name="battery"></ui-icon></button><button class="small" aria-label="Volume"><ui-icon name="speaker"></ui-icon></button>
   <button class="clock">00:41<br>28/05/2023</button>
   <button class="notice"><ui-icon name="notice"></ui-icon><span class="badge">7</span></button>
   <button class="desktop" aria-label="Bureau"></button>`);

define('task-bar',
  `:host{display:flex;height:95px;background:linear-gradient(90deg,#25282a 0,#2f3a3f 3.700%,#2b3526 26.300%,#2f3526 33%,#33372f 39%,#36373c 44%,#38393f 55%,#3a4032 62%,#343926 70%,#303322 74%,#2d3826 80%,#363e38 84%,#2f352b 87%,#282a1e 89%,#2f3828 95%,#2e3928 100%)}
   .start{width:114px}.view{width:112px}nav{flex:1;min-width:0;display:flex;margin-left:9px}`,
  `<button class="start" aria-label="Démarrer"><ui-icon name="windows"></ui-icon></button><task-search></task-search><button class="view" aria-label="Affichage des tâches"><ui-icon name="taskview"></ui-icon></button>
   <nav><task-app icon="mailapp" count="4" open></task-app><task-app icon="explorer" open></task-app><task-app icon="xampp" open></task-app><task-app icon="chromeuser" open active></task-app><task-app icon="word" open many></task-app><task-app icon="powerpoint"></task-app><task-app icon="brave"></task-app><task-app icon="chrome"></task-app><task-app icon="calculator"></task-app><task-app icon="acrobat" open many></task-app><task-app icon="whatsapp" count="86" open></task-app><task-app icon="clipchamp" open></task-app><task-app icon="vscode" open></task-app><task-app icon="lens" open></task-app></nav>
   <system-tray></system-tray>`);

define('desktop-screen',
  `:host{display:flex;flex-direction:column;min-height:100vh;padding:164px 0 99px}
   .page{flex:1;display:flex;overflow:hidden}main{flex:1;min-width:0;background:#cbcbcb;overflow:hidden}page-scrollbar{flex:none}`,
  `<tab-strip></tab-strip><nav-toolbar></nav-toolbar><div class="page"><main><invoice-paper></invoice-paper></main><page-scrollbar></page-scrollbar></div><task-bar></task-bar>`);
</script>
</body>
</html>
